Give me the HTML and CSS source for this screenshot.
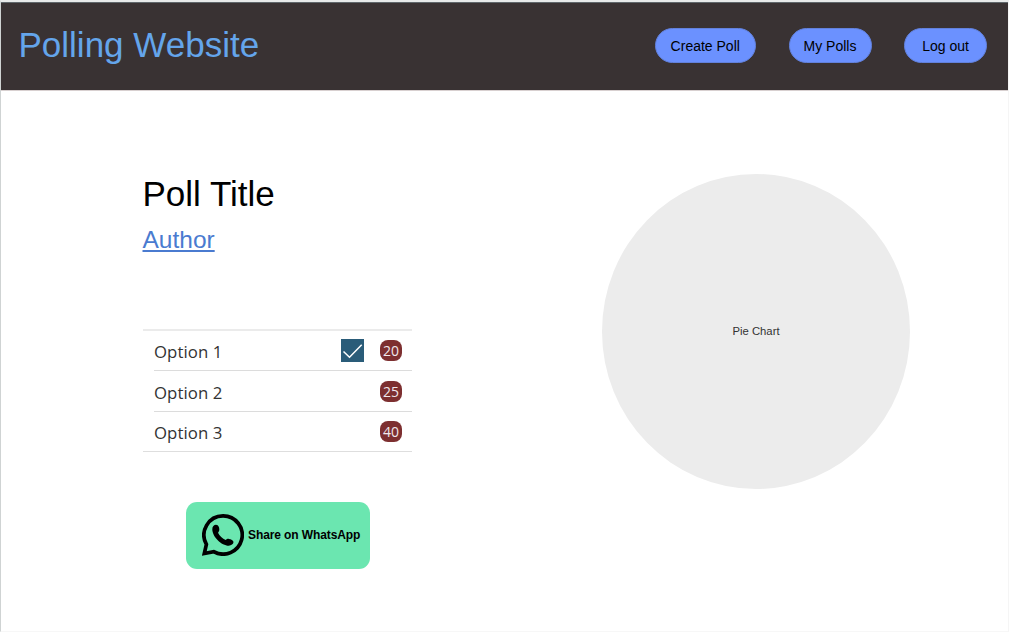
FILE: index.html
```html
<!DOCTYPE html>
<html lang="en">
<head>
<meta charset="utf-8">
<title>Polling Website</title>
<link rel="stylesheet" href="styles.css">
</head>
<body>
<div class="page">
  <header class="header">
    <div class="brand">Polling Website</div>
    <nav class="nav">
      <button class="pill pill-wide">Create Poll</button>
      <button class="pill">My Polls</button>
      <button class="pill">Log out</button>
    </nav>
  </header>
  <main class="main">
    <section class="poll">
      <h1 class="title">Poll Title</h1>
      <a class="author" href="#">Author</a>
      <ul class="options">
        <li class="option">
          <span class="label">Option 1</span>
          <svg class="check" viewBox="0 0 23 23"><rect width="23" height="23" fill="#2a5c79"/><path d="M2.5 12.5L8.5 18.2L20.7 5.7" fill="none" stroke="#fff" stroke-width="1.5"/></svg>
          <span class="badge">20</span>
        </li>
        <li class="option"><span class="label">Option 2</span><span class="badge">25</span></li>
        <li class="option"><span class="label">Option 3</span><span class="badge">40</span></li>
      </ul>
      <button class="share">
        <svg class="whatsapp" viewBox="0 0 42 42"><path d="M21 1.900a19.100 19.100 0 1 1-9.300 35.700L2.300 39.500 4.400 30.300A19.100 19.100 0 0 1 21 1.900z" fill="none" stroke="#000" stroke-width="3.700"/><path d="M10.300 15.200C10.300 12.300 12 10.700 14 10.700c2.700 0 3.500 3.300 3.300 5.300-.1 1.200-.8 2-1.300 2.800 1.500 3 4.500 6 7.700 7.300.9-.8 2-1.400 3.200-1.200 2 .2 4.600 1.300 4.600 3.200 0 2-2.300 3.600-4.700 3.600C19.500 31.700 10.300 22.700 10.300 15.200z"/></svg>
        <span>Share on WhatsApp</span>
      </button>
    </section>
    <section class="chart">Pie Chart</section>
  </main>
</div>
</body>
</html>
```
FILE: styles.css
```css
* { box-sizing: border-box; }
body { margin: 0; background: #fff; font-family: "Liberation Sans", Arial, sans-serif; color: #000; }
button { border: 0; padding: 0; color: #000; font-family: inherit; }
.page { height: 632px; overflow: hidden; border-top: 2px solid #e8eaea; border-left: 1px solid #cfd3d3; border-right: 1px solid #f5f5f5; border-bottom: 1px solid #f7f7f7; }
.header { display: flex; justify-content: space-between; height: 89px; padding: 26px 21px 0 17.5px; background: #393233; border-top: 1px solid #60676b; border-bottom: 1px solid #d8d0d0; }
.brand { font-size: 35px; line-height: 40px; margin-top: -4px; color: #64a5eb; white-space: nowrap; }
.nav { display: flex; gap: 32.5px; }
.pill { width: 83px; height: 35px; margin-top: -1px; border: 1px solid #6281dc; border-radius: 18px; background: #6b91ff; font-size: 14px; }
.pill-wide { width: 101.5px; }
.main { display: flex; }
.poll { width: 269px; margin-left: 142px; padding-top: 83px; }
.title { margin: 0 0 0 -0.5px; font-size: 35px; line-height: 40px; font-weight: 400; }
.author { display: block; width: max-content; margin: 12px 0 0 -0.5px; font-size: 24.5px; line-height: 28px; color: #4a7bd0; text-decoration-thickness: 2px; text-underline-offset: 2px; }
.options { list-style: none; margin: 75px 0 0; padding: 0; border-top: 2px solid #ebebeb; border-bottom: 1px solid #dedede; font-family: "Open Sans", "Noto Sans", sans-serif; }
.option { display: flex; align-items: center; height: 39px; margin-left: 11px; padding-right: 10px; color: #333; }
.option + .option { height: 41px; border-top: 1px solid #dcdcdc; }
.option:last-child { height: 40px; }
.label { flex: 1; font-size: 16.8px; line-height: 24px; padding-top: 3px; letter-spacing: 0.05px; }
.check { width: 23px; height: 23px; margin-right: 16px; }
.badge { width: 22px; height: 21px; border-radius: 8px; background: #7d2f30; color: #f0e8ec; font-size: 14px; line-height: 22px; text-align: center; }
.share { display: flex; align-items: center; width: 184px; height: 67px; margin: 50px 0 0 43px; padding: 0 0 2px 16px; border-radius: 11px; background: #6be6b0; font-size: 12px; font-weight: 700; white-space: nowrap; letter-spacing: -0.1px; }
.whatsapp { width: 42px; height: 42px; margin-right: 4px; }
.chart { display: flex; align-items: center; justify-content: center; width: 308px; height: 315px; margin: 82.5px 0 0 190px; padding-bottom: 1px; border-radius: 50%; background: #ececec; color: #333; font-size: 11.3px; }
```
